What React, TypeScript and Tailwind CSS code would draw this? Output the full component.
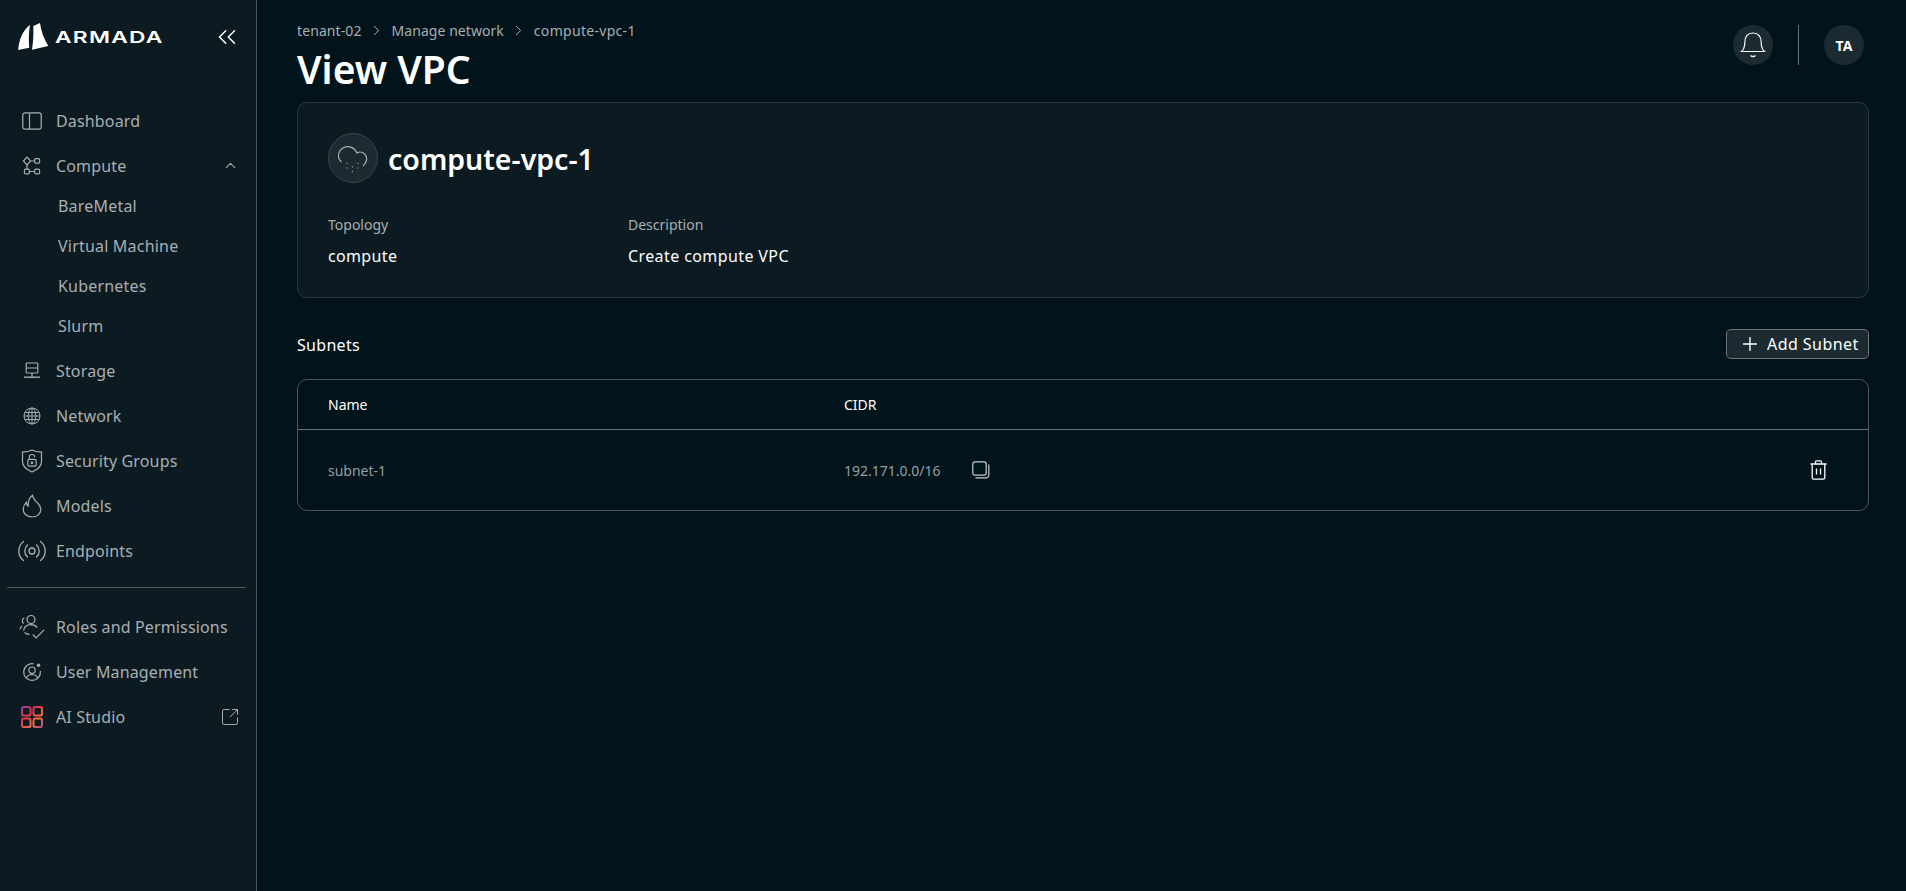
import React from 'react'
import { ChevronRight, ChevronUp, ChevronsLeft, SquareArrowOutUpRight, Plus } from 'lucide-react'

const font = { fontFamily: '"Noto Sans", sans-serif' }

const DashboardIcon = () => (
  <svg width="20" height="18" viewBox="0 0 20 18" fill="none" stroke="currentColor" strokeWidth="1.2">
    <rect x="0.8" y="0.8" width="18.4" height="16.4" rx="2.2" />
    <path d="M7.5 1v16" />
  </svg>
)

const ComputeIcon = () => (
  <svg width="20" height="20" viewBox="0 0 20 20" fill="none" stroke="currentColor" strokeWidth="1.2">
    <path d="M5 1.2 8.6 5 5 8.8 1.4 5Z" />
    <rect x="12.6" y="2.6" width="5" height="4.6" rx="1.2" />
    <rect x="2.4" y="13.2" width="5" height="4.6" rx="1.2" />
    <rect x="12.6" y="13.2" width="5" height="4.6" rx="1.2" />
    <path d="M8.6 5h4M5 8.8v4.4M7.4 15.5h5.2" />
  </svg>
)

const StorageIcon = () => (
  <svg width="18" height="18" viewBox="0 0 18 18" fill="none" stroke="currentColor" strokeWidth="1.2">
    <rect x="3.2" y="1" width="11.6" height="10" rx="0.8" />
    <path d="M3.2 6h11.6M9 11v3.6M1 15h16" />
    <path d="M1 15.6h16" strokeWidth="0.8" />
  </svg>
)

const GlobeIcon = () => (
  <svg width="18" height="18" viewBox="0 0 18 18" fill="none" stroke="currentColor" strokeWidth="1">
    <circle cx="9" cy="9" r="8" />
    <ellipse cx="9" cy="9" rx="3.800" ry="8" />
    <path d="M9 1v16M1.800 5.500h14.400M1 9h16M1.800 12.500h14.400" />
  </svg>
)

const ShieldIcon = () => (
  <svg width="22" height="24" viewBox="0 0 22 24" fill="none" stroke="currentColor" strokeWidth="1.2">
    <path d="M11 1c3 1.600 6 2.100 9.500 2.200v9c0 5-4 8.500-9.500 10.800C5.500 20.700 1.500 17.200 1.500 12.200v-9C5 3.100 8 2.600 11 1Z" />
    <rect x="6.800" y="10.400" width="8.400" height="6.800" rx="1.500" />
    <path d="M8.300 10.400V8.200a2.700 2.700 0 0 1 5.400 0" />
    <circle cx="11" cy="13.800" r="0.8" fill="currentColor" />
  </svg>
)

const FlameIcon = () => (
  <svg width="20" height="24" viewBox="0 0 20 24" fill="none" stroke="currentColor" strokeWidth="1.2">
    <path d="M10.500 1.200c.2 3.400 2.300 4.900 4.800 7.500 2 2.100 3.500 4.300 3.500 6.700 0 4.500-3.800 7.600-8.800 7.600s-8.800-3.300-8.800-7.800c0-2.700 1.200-5 3.100-6.900 0 1.900.6 3.100 1.900 3.900C5.900 8 7.300 3.700 10.500 1.200Z" />
  </svg>
)

const EndpointsIcon = () => (
  <svg width="28" height="22" viewBox="0 0 28 22" fill="none" stroke="currentColor" strokeWidth="1.3" strokeLinecap="round">
    <path d="M5.500 1.500A12 12 0 0 0 5.500 20.500M22.500 1.500A12 12 0 0 1 22.500 20.500" />
    <path d="M9.500 5A8 8 0 0 0 9.500 17M18.500 5A8 8 0 0 1 18.500 17" />
    <circle cx="14" cy="11" r="3" />
  </svg>
)

const RolesIcon = () => (
  <svg width="26" height="25" viewBox="0 0 26 25" fill="none" stroke="currentColor" strokeWidth="1.2">
    <circle cx="12" cy="5.500" r="4" />
    <path d="M4.500 16.500c.8-3.600 3.800-5.800 7.500-5.800 2.700 0 4.900 1.100 6.300 3" />
    <path d="M5.300 3.800A3.400 3.400 0 0 0 4.600 9.500M1 15.500c.2-1.600 1-2.800 2.200-3.600" />
    <path d="M5.500 18.500c1.300 1 3 1.800 5 2M13.800 20.500l3.400 3.400 7.800-8" strokeWidth="1.300" />
  </svg>
)

const UserIcon = () => (
  <svg width="20" height="20" viewBox="0 0 20 20" fill="none" stroke="currentColor" strokeWidth="1.2">
    <path d="M11.500 1.800A8.400 8.400 0 1 0 18.400 9" />
    <circle cx="10" cy="8.200" r="3.200" />
    <path d="M4.300 16c1-2.400 3-3.500 5.700-3.500s4.700 1.100 5.700 3.500" />
    <circle cx="16.500" cy="3.200" r="1.700" fill="currentColor" stroke="none" />
  </svg>
)

const StudioIcon = () => (
  <svg width="22" height="22" viewBox="0 0 22 22" fill="none" strokeWidth="2">
    <defs>
      <linearGradient id="studio" gradientUnits="userSpaceOnUse" x1="0" y1="0" x2="22" y2="22">
        <stop offset="0" stopColor="#8a3fb5" />
        <stop offset="0.35" stopColor="#e0344c" />
        <stop offset="0.7" stopColor="#f5743a" />
        <stop offset="1" stopColor="#a53a9a" />
      </linearGradient>
    </defs>
    <g stroke="url(#studio)">
      <rect x="1" y="1" width="8.500" height="8.500" rx="1.800" />
      <rect x="12.500" y="1" width="8.500" height="8.500" rx="1.800" />
      <rect x="1" y="12.500" width="8.500" height="8.500" rx="1.800" />
      <rect x="12.500" y="12.500" width="8.500" height="8.500" rx="1.800" />
    </g>
  </svg>
)

const Sail = () => (
  <svg width="31" height="28" viewBox="0 0 31 28" fill="white">
    <path d="M12 2C5 7 1 16 .2 27L11.300 24.700C10.500 17 10.800 9 12 2Z" />
    <path d="M15.300 3 22 0C23 8 26 16 30.300 23L14 26.700C15.300 19 15.600 11 15.300 3Z" />
  </svg>
)

const BellIcon = () => (
  <svg width="26" height="28" viewBox="0 0 26 28" fill="none" stroke="white" strokeWidth="1.200">
    <path d="M1.500 20.500c2.500-2 3.200-4.800 3.300-9 .1-6 3.200-9.500 8.200-9.500s8.100 3.500 8.200 9.500c.1 4.200.8 7 3.300 9Z" />
    <path d="M10.500 24.500c1.500 1.300 3.500 1.300 5 0" strokeWidth="1.400" />
  </svg>
)

const CloudIcon = () => (
  <svg width="30" height="28" viewBox="0 0 30 28" fill="none" stroke="#a8b0b3" strokeWidth="1.200" className="mt-[3px]">
    <path d="M3.500 16C1 14 0 11 .5 8 1.500 3 6 .5 10 .7 13.500.9 17 3 19 7c2.500-1.500 6-.8 8 1.500 2.500 2.500 2.500 7.500-2 11.500" />
    <g fill="#8d9699" stroke="none">
      <circle cx="9" cy="17.500" r="0.700" />
      <circle cx="20" cy="17.500" r="0.700" />
      <circle cx="14.500" cy="21" r="0.700" />
      <circle cx="9" cy="22" r="0.700" />
      <circle cx="20" cy="22" r="0.700" />
      <circle cx="14.500" cy="25.500" r="0.700" />
    </g>
  </svg>
)

const CopyIcon = () => (
  <svg width="18" height="18" viewBox="0 0 18 18" fill="none" stroke="#c9cdcf" strokeWidth="1.200">
    <rect x="0.800" y="0.800" width="13.400" height="13.400" rx="2.200" />
    <path d="M16.800 3.500v10.800a2.500 2.500 0 0 1-2.500 2.500H3.500" />
  </svg>
)

const TrashIcon = () => (
  <svg width="17" height="20" viewBox="0 0 17 20" fill="none" stroke="white" strokeWidth="1.300">
    <path d="M0.500 4h16M5.500 4V2a1.200 1.200 0 0 1 1.200-1.200h3.600A1.200 1.200 0 0 1 11.500 2v2" />
    <path d="M2.200 4v13.500a1.700 1.700 0 0 0 1.700 1.700h9.200a1.700 1.700 0 0 0 1.700-1.700V4" />
    <path d="M6.500 8.500v6M10.500 8.500v6" />
  </svg>
)

const NavRow = ({ icon, label, right }: { icon: React.ReactNode; label: string; right?: React.ReactNode }) => (
  <div className="flex h-[37px] items-center pl-[18px] pr-[16px]">
    <span className="flex w-[28px] justify-center">{icon}</span>
    <span className="ml-[10px] flex-1 text-[16px] tracking-[0.15px]">{label}</span>
    {right}
  </div>
)

const Sidebar = () => (
  <aside className="flex w-[257px] shrink-0 flex-col border-r border-[#4b555a] bg-[#0c1b22] text-[#a8afb2]">
    <div className="flex h-[102px] items-start justify-between pl-[18px] pr-[14px] pt-[23px]">
      <div className="flex items-center">
        <Sail />
        <span
          className="ml-[6px] origin-left scale-x-[1.38] text-[16.5px] font-semibold leading-none tracking-[0.9px] text-white"
          style={{ fontFamily: 'Inter, sans-serif' }}
        >
          ARMADA
        </span>
      </div>
      <ChevronsLeft size={30} strokeWidth={1.2} className="mt-[-1px] text-white" />
    </div>
    <nav className="flex flex-col gap-2">
      <NavRow icon={<DashboardIcon />} label="Dashboard" />
      <div>
        <NavRow icon={<ComputeIcon />} label="Compute" right={<ChevronUp size={17} strokeWidth={1.5} className="mr-[1px]" />} />
        <div className="mt-[4px] flex flex-col gap-1 pl-[58px] text-[16px] tracking-[0.2px] text-[#a8afb2]">
          {['BareMetal', 'Virtual Machine', 'Kubernetes', 'Slurm'].map((item) => (
            <div key={item} className="flex h-[36px] items-center">
              {item}
            </div>
          ))}
        </div>
      </div>
      <div className="flex flex-col gap-2">
        <NavRow icon={<StorageIcon />} label="Storage" />
        <NavRow icon={<GlobeIcon />} label="Network" />
        <NavRow icon={<ShieldIcon />} label="Security Groups" />
        <NavRow icon={<FlameIcon />} label="Models" />
        <NavRow icon={<EndpointsIcon />} label="Endpoints" />
      </div>
    </nav>
    <div className="mx-[7px] mb-[20px] mt-[18px] h-px w-[239px] bg-[#4b555a]" />
    <div className="flex flex-col gap-2">
      <NavRow icon={<RolesIcon />} label="Roles and Permissions" />
      <NavRow icon={<UserIcon />} label="User Management" />
      <NavRow icon={<StudioIcon />} label="AI Studio" right={<SquareArrowOutUpRight size={20} strokeWidth={1.2} />} />
    </div>
  </aside>
)

const Breadcrumb = () => (
  <div className="flex items-center text-[14px] leading-[20px] text-[#a8afb2]">
    <span className="tracking-[0.1px]">tenant-02</span>
    <ChevronRight size={17} strokeWidth={1.4} className="mx-[6.500px] mb-[2px]" />
    <span className="tracking-[0.05px]">Manage network</span>
    <ChevronRight size={17} strokeWidth={1.4} className="mx-[6.500px] mb-[2px]" />
    <span className="tracking-[0.3px]">compute-vpc-1</span>
  </div>
)

const App = () => (
  <div className="flex min-h-[891px] bg-[#01141c]" style={font}>
    <Sidebar />
    <main className="flex-1 pl-[40px] pr-[37px]">
      <header className="flex h-[102px] items-start justify-between">
        <div className="pt-[21px]">
          <Breadcrumb />
          <h1 className="mt-[5px] text-[39px] font-semibold leading-[46px] text-white">View VPC</h1>
        </div>
        <div className="flex items-center pr-[5px] pt-[25px]">
          <div className="flex h-[40px] w-[40px] items-center justify-center rounded-full bg-[#1c2a31]">
            <BellIcon />
          </div>
          <div className="mx-[25px] h-[40px] w-px bg-[#6a7377]" />
          <div className="flex h-[40px] w-[40px] items-center justify-center rounded-full bg-[#1c2a31] text-[14px] font-bold text-white">
            TA
          </div>
        </div>
      </header>

      {/* VPC summary */}
      <section className="h-[196px] rounded-[10px] border border-[#2b373d] bg-[#0c1b22] pl-[30px] pt-[30px]">
        <div className="flex items-center">
          <div className="flex h-[50px] w-[50px] items-center justify-center rounded-full border border-[#39444a] bg-[#1c2a31]">
            <CloudIcon />
          </div>
          <h2 className="ml-[10px] mt-[2px] text-[28.500px] font-semibold leading-[36px] text-white">compute-vpc-1</h2>
        </div>
        <div className="mt-[32px] flex">
          <div className="w-[300px]">
            <div className="text-[14px] leading-[20px] text-[#a8afb2]">Topology</div>
            <div className="mt-[10px] text-[16px] leading-[22px] tracking-[0.35px] text-white">compute</div>
          </div>
          <div>
            <div className="text-[14px] leading-[20px] text-[#a8afb2]">Description</div>
            <div className="mt-[10px] text-[16px] leading-[22px] tracking-[0.4px] text-white">Create compute VPC</div>
          </div>
        </div>
      </section>

      {/* Subnets */}
      <div className="mt-[31px] flex h-[30px] items-center justify-between">
        <h3 className="pt-[2px] text-[16px] tracking-[0.3px] text-white">Subnets</h3>
        <button className="flex h-[30px] w-[143px] items-center rounded-[5px] border border-[#6a7377] bg-[#1c2a31] pl-[12px] text-[16px] tracking-[0.45px] text-white">
          <Plus size={22} strokeWidth={1.5} />
          <span className="ml-[6px]">Add Subnet</span>
        </button>
      </div>
      <div className="mt-[20px] h-[132px] rounded-[10px] border border-[#4b555a]">
        <div className="grid h-[50px] grid-cols-[516px_1fr] items-center border-b border-[#6a7377] pl-[30px] text-[14px] text-white">
          <div>Name</div>
          <div>CIDR</div>
        </div>
        <div className="grid h-[80px] grid-cols-[516px_1fr_auto] items-center pl-[30px] pr-[41px] text-[14px] text-[#979ea1]">
          <div>subnet-1</div>
          <div className="flex items-center">
            <span>192.171.0.0/16</span>
            <span className="ml-[31px]">
              <CopyIcon />
            </span>
          </div>
          <TrashIcon />
        </div>
      </div>
    </main>
  </div>
)

export default App
